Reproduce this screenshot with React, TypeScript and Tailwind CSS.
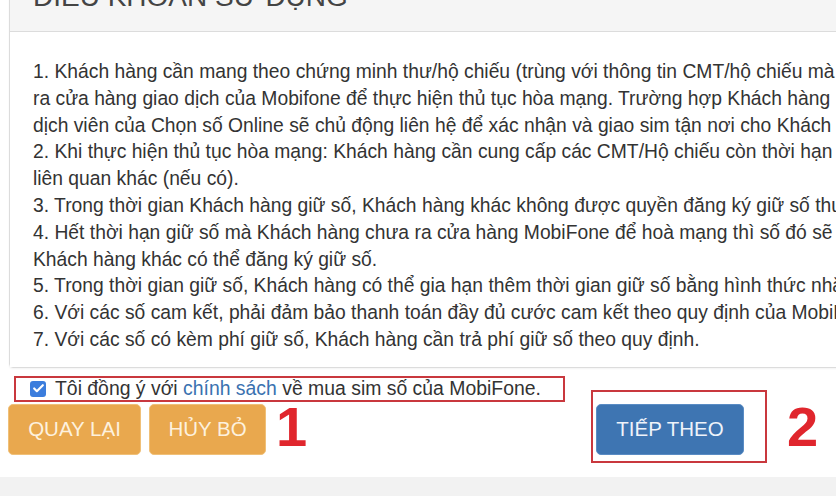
import { Check } from 'lucide-react';

// lines as the panel wraps them; the panel runs past the right edge of the window
const terms = [
  '1. Khách hàng cần mang theo chứng minh thư/hộ chiếu (trùng với thông tin CMT/hộ chiếu mà',
  'ra cửa hàng giao dịch của Mobifone để thực hiện thủ tục hòa mạng. Trường hợp Khách hàng',
  'dịch viên của Chọn số Online sẽ chủ động liên hệ để xác nhận và giao sim tận nơi cho Khách',
  '2. Khi thực hiện thủ tục hòa mạng: Khách hàng cần cung cấp các CMT/Hộ chiếu còn thời hạn',
  'liên quan khác (nếu có).',
  '3. Trong thời gian Khách hàng giữ số, Khách hàng khác không được quyền đăng ký giữ số thuê',
  '4. Hết thời hạn giữ số mà Khách hàng chưa ra cửa hàng MobiFone để hoà mạng thì số đó sẽ',
  'Khách hàng khác có thể đăng ký giữ số.',
  '5. Trong thời gian giữ số, Khách hàng có thể gia hạn thêm thời gian giữ số bằng hình thức nhắn',
  '6. Với các số cam kết, phải đảm bảo thanh toán đầy đủ cước cam kết theo quy định của MobiFone',
  '7. Với các số có kèm phí giữ số, Khách hàng cần trả phí giữ số theo quy định.',
];

export default function App() {
  return (
    <div
      className="flex h-[496px] w-[836px] flex-col overflow-hidden bg-white text-[#333]"
      style={{ fontFamily: '"Liberation Sans", Arial, sans-serif' }}
    >
      {/* Terms panel */}
      <div className="-mt-[18px] ml-[9px] w-[960px] rounded-b-[4px] border border-[#dcdcdc] shadow-[0_1px_2px_rgba(0,0,0,0.05)]">
        <div className="border-b border-[#dcdcdc] bg-[#f5f5f5] pb-[20px] pl-[23px] text-[28px] leading-[28px] text-[#444]">
          ĐIỀU KHOẢN SỬ DỤNG
        </div>
        <div className="bg-white pb-[13px] pl-[23px] pt-[27px] text-[19.3px] leading-[26.8px]">
          {terms.map((t) => (
            <div key={t} className="whitespace-nowrap">
              {t}
            </div>
          ))}
        </div>
      </div>

      {/* Agreement + actions */}
      <div className="mt-[8px] flex">
        <div className="flex flex-col">
          <label className="ml-[14px] flex h-[26px] w-[551px] items-center border-2 border-[#c9383e] pl-[14px] text-[19.4px]">
            <span className="flex h-[16px] w-[16px] items-center justify-center rounded-[3px] bg-[#3b7ddd]">
              <Check className="h-[13px] w-[13px] text-white" strokeWidth={4} />
            </span>
            <span className="ml-[9px] whitespace-nowrap">
              Tôi đồng ý với <span className="text-[#3a72b0]">chính sách</span> về mua sim số của MobiFone.
            </span>
          </label>
          <div className="ml-[8px] mt-[2px] flex items-start">
            <button className="h-[51px] w-[133px] rounded-[5px] border border-[#f0c078] bg-[#e9a84e] text-[20.5px] text-[#fdf1de]">
              QUAY LẠI
            </button>
            <button className="ml-[8px] h-[51px] w-[117px] rounded-[5px] border border-[#f0c078] bg-[#e9a84e] text-[20.5px] text-[#fdf1de]">
              HỦY BỎ
            </button>
            <span className="ml-[10px] -mt-[3px] text-[56px] font-bold leading-[51px] text-[#e0262d]">1</span>
          </div>
        </div>

        <div className="ml-[26px] mt-[14px] flex items-start">
          <div className="border-2 border-[#c9383e] pb-[6px] pl-[3px] pr-[21px] pt-[12px]">
            <button className="h-[51px] w-[148px] rounded-[5px] border border-[#5a8cc4] bg-[#3e75b2] text-[20.5px] text-[#eef3fa]">
              TIẾP THEO
            </button>
          </div>
          <span className="ml-[20px] mt-[11px] text-[56px] font-bold leading-[51px] text-[#e0262d]">2</span>
        </div>
      </div>

      <div className="mt-auto h-[19px] bg-[#f2f2f2]" />
    </div>
  );
}
